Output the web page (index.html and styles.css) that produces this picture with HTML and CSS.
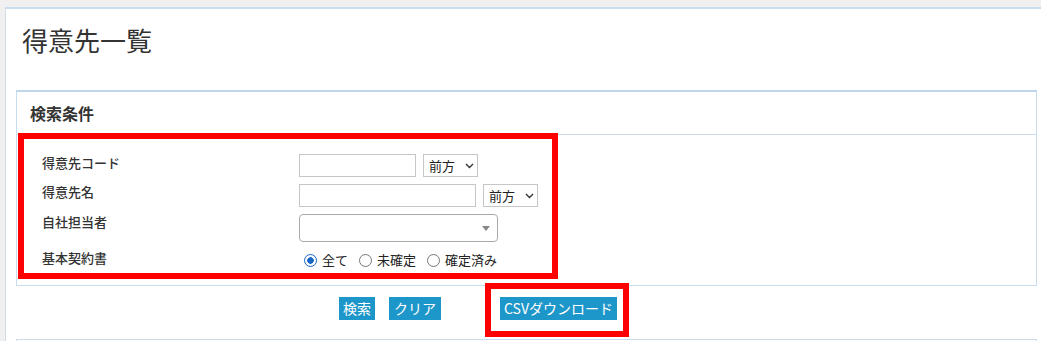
FILE: index.html
```html
<!DOCTYPE html>
<html lang="ja">
<head>
<meta charset="utf-8">
<title>得意先一覧</title>
<link rel="stylesheet" href="styles.css">
</head>
<body>
<div class="page">
  <h1 class="title">得意先一覧</h1>
  <section class="box">
    <div class="box-head">検索条件</div>
    <div class="form">
      <div class="row row1">
        <div class="label">得意先コード</div>
        <div class="ctrl">
          <span class="input w-code"></span>
          <span class="sel">前方<svg class="chev" width="9" height="6" viewBox="0 0 9 6"><path d="M1 1 L4.5 4.5 L8 1" fill="none" stroke="#333" stroke-width="1.4"/></svg></span>
        </div>
      </div>
      <div class="row row2">
        <div class="label">得意先名</div>
        <div class="ctrl">
          <span class="input w-name"></span>
          <span class="sel">前方<svg class="chev" width="9" height="6" viewBox="0 0 9 6"><path d="M1 1 L4.5 4.5 L8 1" fill="none" stroke="#333" stroke-width="1.4"/></svg></span>
        </div>
      </div>
      <div class="row row3">
        <div class="label">自社担当者</div>
        <div class="ctrl">
          <span class="combo"><svg class="tri" width="8" height="5" viewBox="0 0 8 5"><path d="M0 0 L8 0 L4 5 Z" fill="#888"/></svg></span>
        </div>
      </div>
      <div class="row row4">
        <div class="label">基本契約書</div>
        <div class="ctrl radios">
          <span class="opt"><span class="radio checked"></span>全て</span>
          <span class="opt"><span class="radio"></span>未確定</span>
          <span class="opt"><span class="radio"></span>確定済み</span>
        </div>
      </div>
    </div>
  </section>
  <div class="actions">
    <span class="btn">検索</span>
    <span class="btn btn-clear">クリア</span>
    <span class="btn btn-csv">CSVダウンロード</span>
  </div>
  <section class="box box2"></section>
</div>
</body>
</html>
```

FILE: styles.css
```css
html, body {
  margin: 0;
  padding: 0;
}
body {
  background: #f0f0f0;
  font-family: "Noto Sans CJK JP", "Noto Sans", sans-serif;
  color: #333;
  width: 1041px;
  height: 341px;
  overflow: hidden;
}
.page {
  margin: 7px 0 0 5px;
  background: #fff;
  border-top: 2px solid #c9ddef;
  border-left: 1px solid #cfdde9;
  height: 332px;
  overflow: hidden;
}
.title {
  margin: 13px 0 32px 16px;
  font-size: 26px;
  line-height: 36px;
  font-weight: 400;
  color: #333;
}
.box {
  margin: 0 4px 0 10px;
  border: 1px solid #c8dcee;
  border-top: 2px solid #bdd6ee;
}
.box-head {
  height: 42px;
  line-height: 42px;
  padding-left: 13px;
  font-size: 16px;
  font-weight: 700;
  border-bottom: 1px solid #cadcec;
}
.form {
  position: relative;
  padding: 19px 0 12px 25px;
}
.form::after {
  content: "";
  position: absolute;
  left: 1px;
  top: -2px;
  width: 528px;
  height: 134px;
  border: 6px solid #ff0000;
}
.row {
  display: flex;
  align-items: flex-start;
}
.row1 { height: 29px; }
.row2 { height: 30px; }
.row3 { height: 36px; }
.row4 { height: 24px; }
.label {
  width: 257px;
  flex: none;
  font-size: 13px;
  line-height: 18px;
  font-weight: 500;
  color: #333;
}
.ctrl {
  display: flex;
  align-items: flex-start;
  gap: 7px;
}
.row2 .ctrl, .row3 .ctrl { margin-top: 1px; }
.input {
  display: block;
  height: 21px;
  border: 1px solid #c6c6c6;
  background: #fff;
}
.w-code { width: 115px; }
.w-name { width: 175px; }
.sel {
  display: flex;
  align-items: center;
  box-sizing: border-box;
  width: 55px;
  height: 23px;
  padding-left: 5px;
  border: 1px solid #c6c6c6;
  font-size: 13px;
  color: #222;
}
.chev {
  margin-left: 10px;
}
.combo {
  display: flex;
  align-items: center;
  justify-content: flex-end;
  box-sizing: border-box;
  width: 199px;
  height: 28px;
  padding-right: 7px;
  border: 1px solid #aaa;
  border-radius: 4px;
  background: #fff;
}
.radios {
  margin-top: 2px;
  margin-left: 5px;
  gap: 11px;
  font-size: 13px;
  line-height: 18px;
  color: #222;
}
.opt {
  display: flex;
  align-items: center;
}
.radio {
  box-sizing: border-box;
  width: 13px;
  height: 13px;
  margin-right: 5px;
  border: 1px solid #777;
  border-radius: 50%;
  background: #fff;
}
.radio.checked {
  border: 1.5px solid #1868c9;
  background: radial-gradient(circle, #1868c9 0 3px, #fff 3.5px);
}
.actions {
  display: flex;
  align-items: flex-start;
  height: 53px;
  box-sizing: border-box;
  padding: 11px 0 0 333px;
}
.btn {
  position: relative;
  display: block;
  height: 23px;
  line-height: 23px;
  padding: 0 4px;
  background: #1d96c9;
  color: #fff;
  font-size: 14px;
}
.btn-clear { margin-left: 14px; padding: 0 5px; }
.btn-csv { margin-left: 59px; }
.btn-csv::after {
  content: "";
  position: absolute;
  left: -15px;
  right: -12px;
  top: -14px;
  bottom: -17px;
  border: 6px solid #ff0000;
}
.box2 {
  height: 60px;
  border-bottom: none;
  border-top: 1px solid #c8dcee;
}
```
